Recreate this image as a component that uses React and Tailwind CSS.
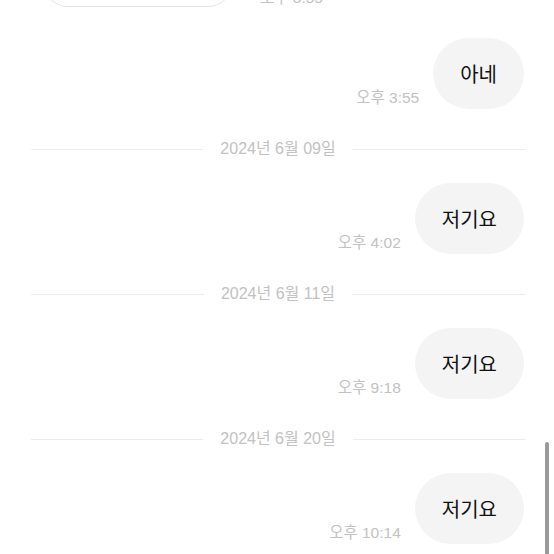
const font = { fontFamily: '"Noto Sans CJK KR", "Noto Sans", sans-serif' };
const meta = { fontFamily: '"Liberation Sans", "Noto Sans CJK KR", sans-serif' };

function DateDivider({ label }) {
  return (
    <div className="flex h-[20px] items-center gap-[17px] pl-[31px] pr-[29px]">
      <div className="h-px flex-1 bg-[#ececec]" />
      <span className="text-[16px] leading-[20px] text-[#c2c2c2]" style={meta}>
        {label}
      </span>
      <div className="h-px flex-1 bg-[#ececec]" />
    </div>
  );
}

function MyMessage({ text, time }) {
  return (
    <div className="flex items-end justify-end gap-[14px] pr-[30px]">
      <span className="mb-[3px] text-[15.5px] leading-[17px] text-[#c2c2c2]" style={meta}>
        {time}
      </span>
      <div className="flex h-[71px] items-center justify-center rounded-[36px] bg-[#f4f4f4] px-[27px] text-[20px] text-[#111]">
        {text}
      </div>
    </div>
  );
}

export default function App() {
  const days = [
    { label: '2024년 6월 09일', time: '오후 4:02' },
    { label: '2024년 6월 11일', time: '오후 9:18' },
    { label: '2024년 6월 20일', time: '오후 10:14' },
  ];

  return (
    <div className="relative h-[554px] w-[554px] overflow-hidden bg-white" style={font}>
      <div className="flex flex-col">
        <div className="mt-[-43px] flex items-end gap-[27px] pl-[43px]">
          <div className="h-[50px] w-[190px] rounded-[25px] border border-[#e3e3e3] bg-white" />
          <span className="mb-[1px] text-[15.5px] leading-[17px] text-[#c2c2c2]" style={meta}>
            오후 3:55
          </span>
        </div>

        <div className="mt-[31px]">
          <MyMessage text="아네" time="오후 3:55" />
        </div>

        {days.map((d) => (
          <div key={d.label} className="flex flex-col">
            <div className="mt-[30px]">
              <DateDivider label={d.label} />
            </div>
            <div className="mt-[24px]">
              <MyMessage text="저기요" time={d.time} />
            </div>
          </div>
        ))}
      </div>

      <div className="absolute right-[5px] top-[442px] h-[120px] w-[4px] rounded-full bg-[#9a9a9a]" />
    </div>
  );
}
